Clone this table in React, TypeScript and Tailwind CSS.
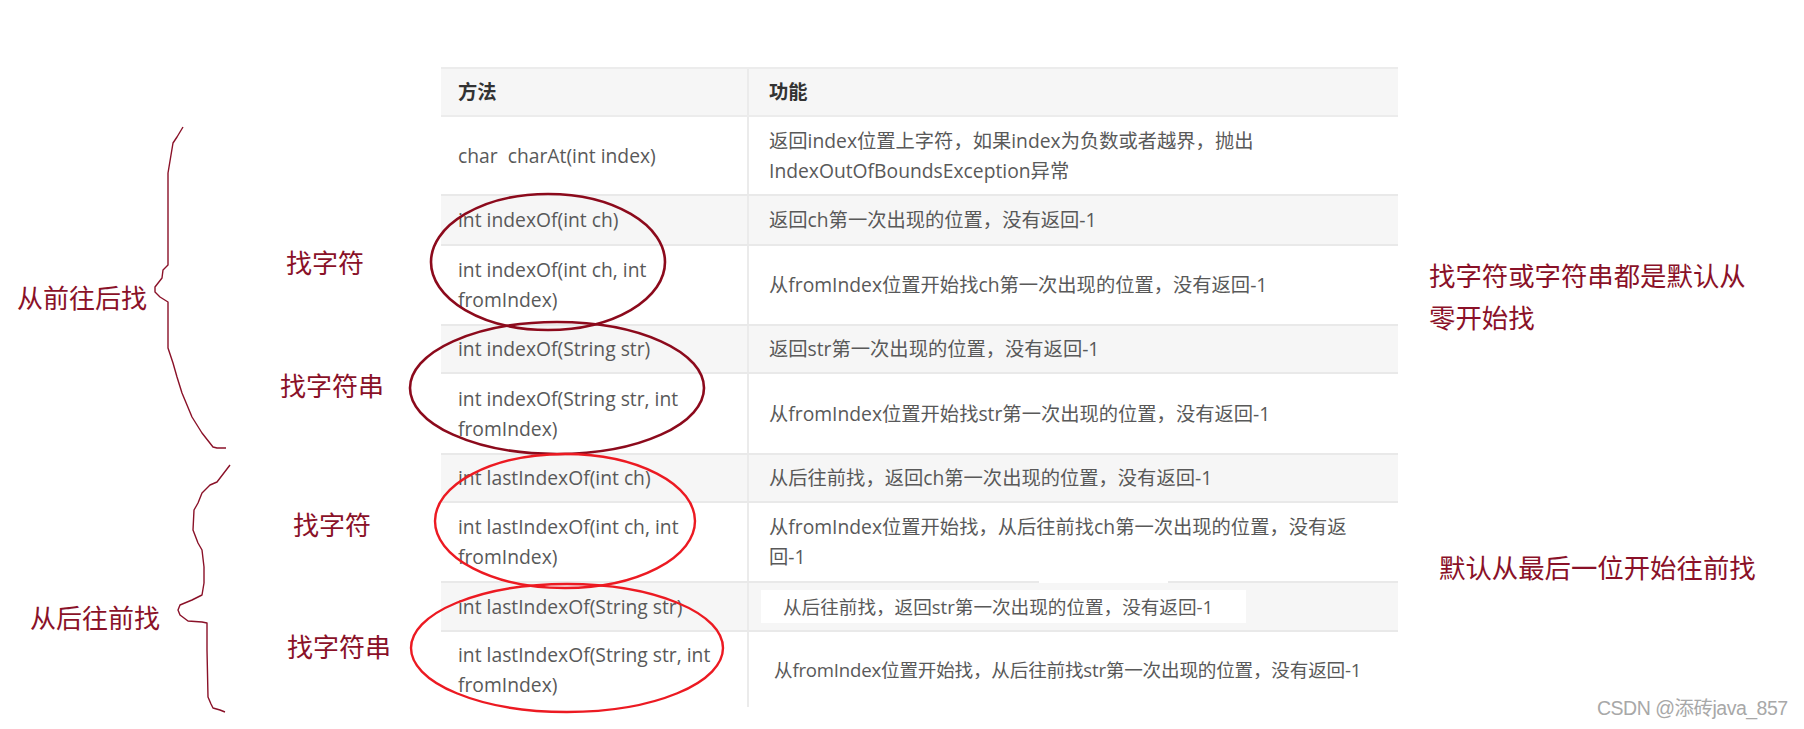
import type { ReactNode } from "react";

type Row = {
  method: ReactNode;
  desc: ReactNode;
  height: string;
  shaded: boolean;
  kind?: "patched" | "pasted";
};

const ROWS: Row[] = [
  {
    method: "char\u00a0\u00a0charAt(int index)",
    desc: (
      <>
        返回index位置上字符，如果index为负数或者越界，抛出
        <br />
        IndexOutOfBoundsException异常
      </>
    ),
    height: "h-[79px]",
    shaded: false,
  },
  { method: "int indexOf(int ch)", desc: "返回ch第一次出现的位置，没有返回-1", height: "h-[50px]", shaded: true },
  {
    method: (
      <>
        int indexOf(int ch, int
        <br />
        fromIndex)
      </>
    ),
    desc: "从fromIndex位置开始找ch第一次出现的位置，没有返回-1",
    height: "h-[80px]",
    shaded: false,
  },
  { method: "int indexOf(String str)", desc: "返回str第一次出现的位置，没有返回-1", height: "h-[48px]", shaded: true },
  {
    method: (
      <>
        int indexOf(String str, int
        <br />
        fromIndex)
      </>
    ),
    desc: "从fromIndex位置开始找str第一次出现的位置，没有返回-1",
    height: "h-[81px]",
    shaded: false,
  },
  { method: "int lastIndexOf(int ch)", desc: "从后往前找，返回ch第一次出现的位置，没有返回-1", height: "h-[48px]", shaded: true },
  {
    method: (
      <>
        int lastIndexOf(int ch, int
        <br />
        fromIndex)
      </>
    ),
    desc: (
      <>
        从fromIndex位置开始找，从后往前找ch第一次出现的位置，没有返
        <br />
        回-1
      </>
    ),
    height: "h-[80px]",
    shaded: false,
  },
  {
    method: "int lastIndexOf(String str)",
    desc: "从后往前找，返回str第一次出现的位置，没有返回-1",
    height: "h-[49px]",
    shaded: true,
    kind: "patched",
  },
  {
    method: (
      <>
        int lastIndexOf(String str, int
        <br />
        fromIndex)
      </>
    ),
    desc: "从fromIndex位置开始找，从后往前找str第一次出现的位置，没有返回-1",
    height: "h-[75px]",
    shaded: false,
    kind: "pasted",
  },
];

// hand-drawn annotation labels, placed where they sit on the screenshot
const LABELS = [
  { text: "从前往后找", pos: "left-[17px] top-[284px]" },
  { text: "找字符", pos: "left-[286px] top-[249px]" },
  { text: "找字符串", pos: "left-[280px] top-[372px]" },
  { text: "从后往前找", pos: "left-[30px] top-[604px]" },
  { text: "找字符", pos: "left-[293px] top-[511px]" },
  { text: "找字符串", pos: "left-[287px] top-[633px]" },
];

const BRACE_TOP =
  "183,127 177,137 173,143 171,155 168,173 168,265 163,270 162,278 155,287 155,292 160,297 168,302 168,348 173,363 177,377 182,393 192,417 202,433 213,447 217,448 226,448";
const BRACE_BOTTOM =
  "230,465 217,482 210,485 202,493 198,503 194,510 193,530 198,543 202,550 204,567 204,583 202,595 192,600 180,605 178,610 180,615 188,621 202,622 207,623 207,650 208,697 211,704 213,708 220,710 225,712";

function Annotations() {
  return (
    <svg className="pointer-events-none absolute inset-0" width={1804} height={729} viewBox="0 0 1804 729" fill="none">
      <polyline points={BRACE_TOP} stroke="#8a1128" strokeWidth={1.4} strokeLinejoin="round" />
      <polyline points={BRACE_BOTTOM} stroke="#8a1128" strokeWidth={1.4} strokeLinejoin="round" />
      <ellipse cx={548} cy={262} rx={117} ry={68} stroke="#8c0a1c" strokeWidth={2.6} />
      <ellipse cx={557} cy={388} rx={147} ry={66} stroke="#8c0a1c" strokeWidth={2.6} />
      <ellipse cx={565} cy={521} rx={130} ry={67} stroke="#ec1a22" strokeWidth={2.4} />
      <ellipse cx={567} cy={648} rx={156} ry={64} stroke="#ec1a22" strokeWidth={2.4} />
    </svg>
  );
}

function MethodTable() {
  return (
    <div className="w-[957px] shrink-0 text-[19.3px] leading-[30px] text-[#595959]">
      <div className="flex h-[50px] border-y-2 border-[#ececec] bg-[#f6f6f6] font-bold text-[#333]">
        <div className="flex w-[308px] items-center border-r-2 border-[#ebebeb] px-[17px]">方法</div>
        <div className="flex flex-1 items-center pl-[20px]">功能</div>
      </div>
      {ROWS.map((row, i) => (
        <div
          key={i}
          className={`relative flex ${row.height} ${row.kind === "pasted" ? "" : "border-b-2"} border-[#e9e9e9] ${
            row.shaded ? "bg-[#f6f6f6]" : "bg-white"
          }`}
        >
          <div className="flex w-[308px] shrink-0 items-center border-r-2 border-[#ebebeb] px-[17px]">
            <span>{row.method}</span>
          </div>
          {row.kind === "patched" ? (
            <div className="flex flex-1 items-center pl-[12px]">
              <div className="flex h-[33px] w-[485px] items-center bg-white pl-[22px] text-[18.6px]">{row.desc}</div>
              {/* gap in the row line where the screenshot was pasted */}
              <div className="absolute -top-[2px] left-[598px] h-[2px] w-[129px] bg-white" />
            </div>
          ) : row.kind === "pasted" ? (
            <div className="flex flex-1 items-center pl-[25px] text-[18.6px] tracking-[-0.2px]">{row.desc}</div>
          ) : (
            <div className="flex flex-1 items-center pl-[20px]">
              <span>{row.desc}</span>
            </div>
          )}
        </div>
      ))}
    </div>
  );
}

export default function App() {
  return (
    <div className="relative h-[729px] w-[1804px] overflow-hidden bg-white font-['Open_Sans','Noto_Sans_CJK_SC',sans-serif]">
      <div className="flex pt-[67px]">
        <div className="w-[441px] shrink-0" />
        <MethodTable />
        <div className="flex flex-col font-['Noto_Sans_CJK_SC',sans-serif] text-[26.4px] leading-[42px] text-[#8a1128]">
          <p className="ml-[31px] mt-[187px]">
            找字符或字符串都是默认从
            <br />
            零开始找
          </p>
          <p className="ml-[41px] mt-[208px]">默认从最后一位开始往前找</p>
        </div>
      </div>

      <Annotations />

      {LABELS.map((l, i) => (
        <span
          key={i}
          className={`absolute ${l.pos} font-['Noto_Sans_CJK_SC',sans-serif] text-[26px] leading-[26px] text-[#8a1128]`}
        >
          {l.text}
        </span>
      ))}

      <span className="absolute left-[1597px] top-[696px] font-['Liberation_Sans','Noto_Sans_CJK_SC',sans-serif] text-[19.5px] leading-[24px] tracking-[-0.5px] text-[#a8a8a8]">
        CSDN @添砖java_857
      </span>
    </div>
  );
}
